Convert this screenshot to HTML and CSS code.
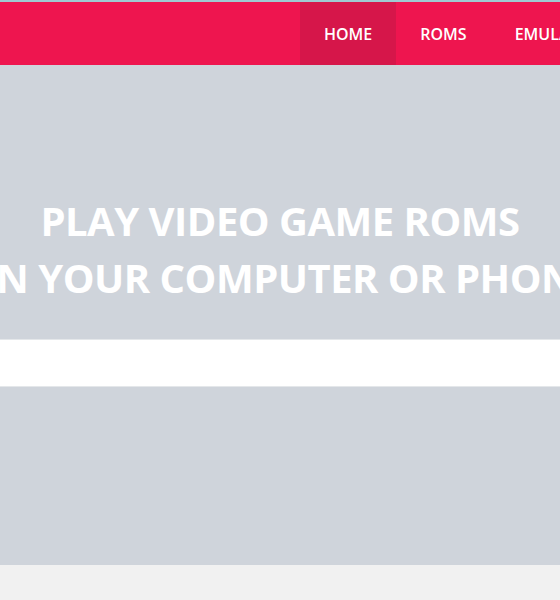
FILE: index.html
```html
<!DOCTYPE html>
<html lang="en">
<head>
<meta charset="utf-8">
<title>Play Video Game ROMs</title>
<link rel="stylesheet" href="styles.css">
</head>
<body>
<div class="topline"></div>
<header class="header">
  <nav class="nav">
    <a class="nav-item active" href="#">HOME</a>
    <a class="nav-item" href="#">ROMS</a>
    <a class="nav-item" href="#">EMULATORS</a>
  </nav>
</header>
<section class="hero">
  <h1 class="hero-title">
    <span class="line">PLAY VIDEO GAME ROMS</span>
    <span class="line">ON YOUR COMPUTER OR PHONE</span>
  </h1>
</section>
<div class="search-band"></div>
<section class="hero-lower"></section>
<main class="content"></main>
</body>
</html>
```
FILE: styles.css
```css
* { box-sizing: border-box; }
html, body { margin: 0; padding: 0; }
body {
  width: 560px;
  height: 600px;
  overflow: hidden;
  background: #f1f1f1;
  font-family: "Open Sans", "Noto Sans", sans-serif;
}
.topline { height: 2px; background: #9fcad2; }
.header {
  height: 63px;
  background: #ee154f;
  display: flex;
  padding-left: 300px;
}
.nav { display: flex; flex-shrink: 0; }
.nav-item {
  display: flex;
  align-items: center;
  padding: 1px 24px 0;
  color: #fff;
  text-decoration: none;
  font-size: 16px;
  font-weight: 600;
  white-space: nowrap;
}
.nav-item.active { background: #d6164a; }
.hero {
  height: 274px;
  background: #cfd4db;
  display: flex;
  justify-content: center;
  padding-top: 127px;
}
.hero-title {
  margin: 0;
  display: flex;
  flex-direction: column;
  align-items: center;
  color: #fff;
  font-size: 40px;
  font-weight: 700;
  letter-spacing: -0.5px;
  line-height: 57px;
}
.line { white-space: nowrap; }
.search-band {
  height: 48px;
  background: #fff;
  border-top: 1px solid #e4e7ea;
  border-bottom: 1px solid #e4e7ea;
}
.hero-lower { height: 178px; background: #cfd4db; }
.content { height: 35px; }
```
